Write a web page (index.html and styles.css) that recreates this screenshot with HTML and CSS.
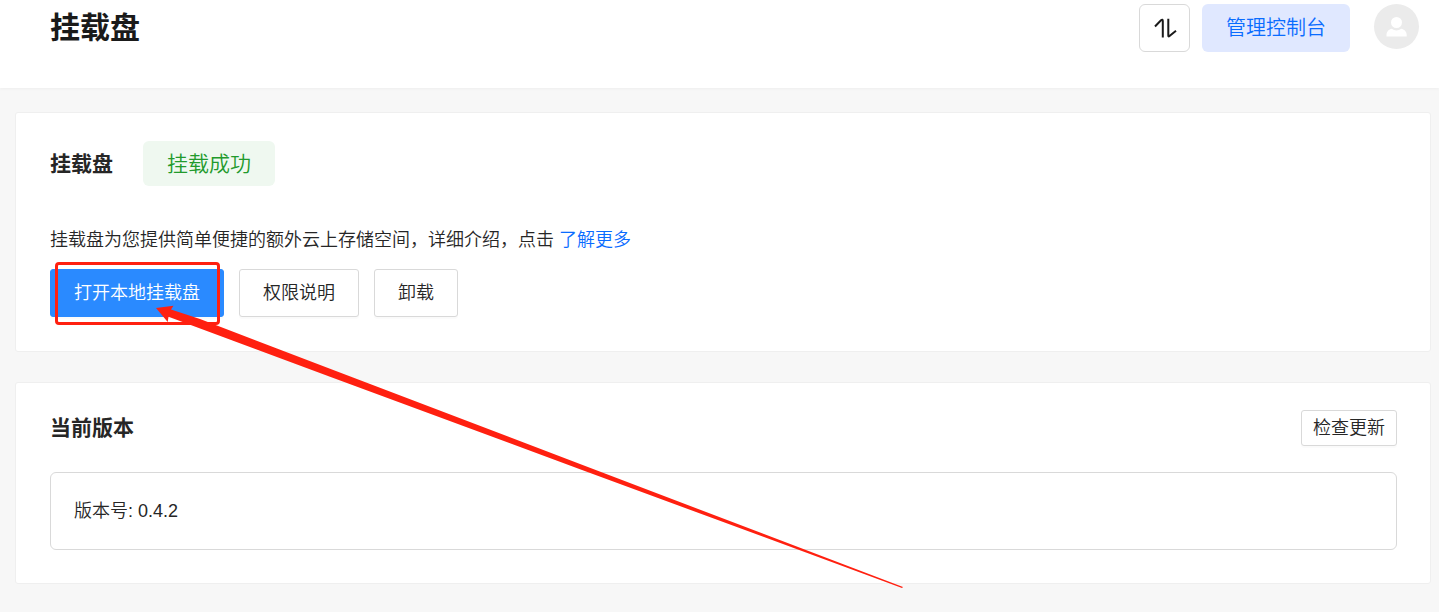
FILE: index.html
```html
<!DOCTYPE html>
<html lang="zh-CN">
<head>
<meta charset="utf-8">
<meta name="viewport" content="width=device-width, initial-scale=1">
<title>挂载盘</title>
<link rel="stylesheet" href="styles.css">
</head>
<body>
<header class="topbar">
  <h1 class="page-title">挂载盘</h1>
  <div class="topbar-actions">
    <button class="transfer-button" type="button" aria-label="传输列表">
      <svg width="24" height="24" viewBox="0 0 24 24" fill="none" stroke="currentColor" stroke-width="2">
        <path d="M2 10.500 8 4.300Q9.800 2.800 9.800 5V21.500M15.300 2.800V19.500Q15.300 21 16.500 20L23 14.800"/>
      </svg>
    </button>
    <button class="console-button" type="button">管理控制台</button>
    <button class="avatar" type="button" aria-label="账户">
      <svg width="45" height="45" viewBox="0 0 45 45" fill="#fff">
        <circle cx="22.500" cy="18.500" r="5.500"/>
        <path d="M12.500 32.500v-1.500c0-3.400 2.300-5.700 5.400-6.200 2.900 2.100 6.300 2.100 9.200 0 3.100.5 5.600 2.800 5.600 6.200v1.500z"/>
      </svg>
    </button>
  </div>
</header>
<main class="content">
  <section class="card">
    <div class="status-row">
      <h2 class="card-title">挂载盘</h2>
      <span class="badge">挂载成功</span>
    </div>
    <p class="intro">挂载盘为您提供简单便捷的额外云上存储空间，详细介绍，点击 <a class="link" href="#more">了解更多</a></p>
    <div class="actions">
      <div class="marked">
        <button class="button primary" type="button">打开本地挂载盘</button>
        <span class="marker"></span>
      </div>
      <button class="button" type="button">权限说明</button>
      <button class="button" type="button">卸载</button>
    </div>
  </section>
  <section class="card version-card">
    <div class="version-head">
      <h2 class="card-title">当前版本</h2>
      <button class="button small" type="button">检查更新</button>
    </div>
    <div class="version-box">版本号: 0.4.2</div>
  </section>
</main>
<svg class="arrow" width="760" height="290" viewBox="150 300 760 290" aria-hidden="true">
  <path fill="#ff2010" d="M156 308 173.500 305.800 171 309.500 200 319 330 368.700 580 464 903 587 902 588 580 469.200 330 376.700 168.500 316.700 167.700 322z"/>
</svg>
</body>
</html>
```
FILE: styles.css
```css
* {
  box-sizing: border-box;
}

body {
  position: relative;
  margin: 0;
  background: #f7f7f7;
  color: #262626;
  font-family: "Liberation Sans", "Noto Sans CJK SC", sans-serif;
  font-size: 18px;
  font-weight: 350;
  line-height: 28px;
}

h1, h2, p {
  margin: 0;
}

button {
  font: inherit;
  color: inherit;
  cursor: pointer;
}

.topbar {
  display: flex;
  justify-content: space-between;
  align-items: flex-start;
  padding: 4px 20px 36px 50px;
  background: #fff;
  box-shadow: 0 1px 3px rgba(0, 0, 0, 0.04);
}

.page-title {
  color: #1a1a1a;
  font-size: 30px;
  line-height: 48px;
}

.topbar-actions {
  display: flex;
  align-items: flex-start;
}

.transfer-button {
  display: flex;
  align-items: center;
  justify-content: center;
  width: 51px;
  height: 48px;
  margin-right: 12px;
  padding: 0;
  border: 1px solid #d9d9d9;
  border-radius: 6px;
  background: #fff;
  color: #1a1a1a;
}

.console-button {
  height: 48px;
  margin-right: 24px;
  padding: 0 24px;
  border: 0;
  border-radius: 6px;
  background: #e0e8ff;
  color: #0a6cff;
  font-size: 20px;
}

.avatar {
  width: 45px;
  height: 45px;
  padding: 0;
  border: 0;
  border-radius: 50%;
  background: #ebebeb;
}

.avatar svg {
  display: block;
}

.content {
  display: grid;
  gap: 30px;
  padding: 24px 8px 28px 15px;
}

.card {
  padding: 28px 33px 34px 34px;
  border: 1px solid #efefef;
  border-radius: 3px;
  background: #fff;
}

.status-row {
  display: flex;
  align-items: center;
  gap: 30px;
}

.card-title {
  font-size: 21px;
  line-height: 36px;
}

.badge {
  padding: 0 24px;
  border-radius: 6px;
  background: #eff8f0;
  color: #229a2c;
  font-size: 21px;
  line-height: 45px;
}

.intro {
  margin: 40px 0 15px;
}

.link {
  color: #0a6cff;
  text-decoration: none;
}

.actions {
  display: flex;
  gap: 15px;
}

.button {
  height: 48px;
  padding: 0 23px;
  border: 1px solid #d9d9d9;
  border-radius: 3px;
  background: #fff;
  box-shadow: 0 2px 1px rgba(0, 0, 0, 0.02);
}

.primary {
  display: block;
  border-color: #2a8aff;
  background: #2a8aff;
  color: #fff;
}

.small {
  height: 36px;
  padding: 0 11px;
}

.marked {
  position: relative;
}

.marker {
  position: absolute;
  inset: -7px 4px -8px 5px;
  border: 3px solid #ff2010;
  border-radius: 4px;
  pointer-events: none;
}

.version-card {
  padding-top: 27px;
  padding-bottom: 33px;
}

.version-head {
  display: flex;
  align-items: center;
  justify-content: space-between;
  margin-bottom: 26px;
}

.version-box {
  padding: 24px 23px;
  border: 1px solid #d9d9d9;
  border-radius: 6px;
}

.arrow {
  position: absolute;
  top: 300px;
  left: 150px;
  pointer-events: none;
}
```
